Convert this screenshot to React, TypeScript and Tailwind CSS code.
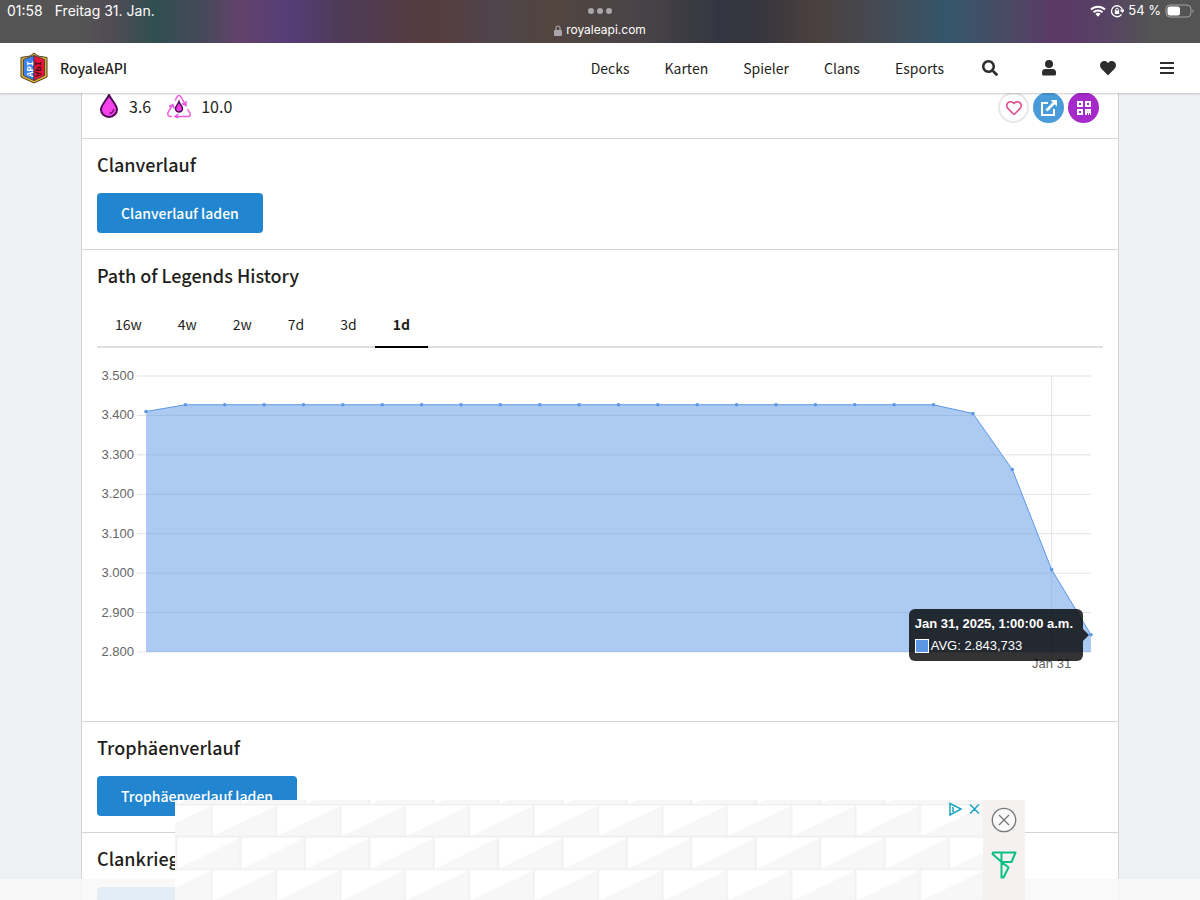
import { FaHeart, FaRegHeart, FaSearch } from 'react-icons/fa';

const NAV_ITEMS = ['Decks', 'Karten', 'Spieler', 'Clans', 'Esports'];
const RANGES = ['16w', '4w', '2w', '7d', '3d', '1d'];
const TICKS = [3500, 3400, 3300, 3200, 3100, 3000, 2900, 2800];
const VALUES = [3410, ...Array.from({ length: 20 }, () => 3427), 3405, 3263, 3009, 2843.733];

const PLOT = { left: 49, right: 994, top: 16, bottom: 292 };
const toX = (index: number) => PLOT.left + (index * (PLOT.right - PLOT.left)) / (VALUES.length - 1);
const toY = (value: number) => PLOT.top + ((3500 - value) / 700) * (PLOT.bottom - PLOT.top);

const Logo = () => (
  <svg viewBox="0 0 28 32" className="h-8 w-7" aria-hidden="true">
    <path d="M14 1 18 4 27 5.500V25L14 31 1 25V5.500L10 4Z" fill="#e5b02c" stroke="#4d4126" />
    <path d="M14 3.500 3.500 7.500V23.500L14 28.500Z" fill="#3b82f6" stroke="#334" strokeWidth="0.8" />
    <path d="M14 3.500 24.500 7.500V23.500L14 28.500Z" fill="#ee1138" stroke="#334" strokeWidth="0.8" />
    <g fontSize="9" fontWeight="bold" fontFamily="Liberation Mono, monospace">
      <text transform="translate(13 25) rotate(-90)" fill="#fff">
        API
      </text>
      <text transform="translate(15 25) scale(-1 1) rotate(-90)" fill="#42111e">
        API
      </text>
    </g>
  </svg>
);

const UserIcon = () => (
  <svg viewBox="0 0 16 16" className="size-4" fill="currentColor" aria-hidden="true">
    <circle cx="8" cy="4" r="4" />
    <path d="M4.500 9h7a3.500 3.500 0 0 1 3.500 3.500V14a1.500 1.500 0 0 1-1.500 1.500h-11A1.500 1.500 0 0 1 1 14v-1.500A3.500 3.500 0 0 1 4.500 9Z" />
  </svg>
);

const MenuIcon = () => (
  <svg viewBox="0 0 16 16" className="size-4" fill="currentColor" aria-hidden="true">
    <path d="M1 2h14v2H1zM1 7h14v2H1zM1 12h14v2H1z" />
  </svg>
);

const StatusBar = () => (
  <div className="relative h-[43px] bg-[linear-gradient(90deg,#545454_0%,#545454_7%,#524b55_9%,#304f50_13%,#47485a_17%,#63426a_20%,#553d78_24%,#4e3b5a_28%,#563d3d_36%,#4f444b_41%,#51453f_46%,#4a4448_53%,#333641_60%,#36353f_63%,#4b403e_68%,#454a53_73%,#34566a_79%,#4a4a63_84%,#5c3867_88%,#574264_92%,#545454_96%,#545454_100%)] font-[Inter,sans-serif] text-[13px] text-white">
    <div className="flex justify-between pr-1.5 pl-[7px]">
      <div className="flex gap-3 text-[14px]">
        <span>01:58</span>
        <span>Freitag 31. Jan.</span>
      </div>
      <div className="flex items-center gap-1">
        <svg viewBox="0 0 16 12" className="h-3 w-4" fill="none" stroke="currentColor" strokeWidth="2" aria-hidden="true">
          <path d="M1 4.500a10 10 0 0 1 14 0M3.500 7.300a6.500 6.500 0 0 1 9 0" />
          <path d="M5.500 9a3.700 3.700 0 0 1 5 0L8 11.800Z" fill="currentColor" stroke="none" />
        </svg>
        <svg viewBox="0 0 14 14" className="size-3.5" fill="none" stroke="currentColor" aria-hidden="true">
          <path d="M11.500 10.500A5.500 5.500 0 1 1 12.500 6.500M10.500 6l2 2 1.500-2.500" strokeWidth="1.300" />
          <path d="M4.800 6.500h4.400V10H4.800z" fill="currentColor" stroke="none" />
          <path d="M5.700 7V5.500a1.300 1.300 0 0 1 2.600 0V7" />
        </svg>
        <span>54 %</span>
        <svg viewBox="0 0 29 14" className="h-3.5 w-[29px]" aria-hidden="true">
          <rect x="1" y="1" width="25" height="12" rx="4" fill="none" stroke="#a3a3a3" />
          <rect x="2.500" y="2.500" width="12.500" height="9" rx="2.500" fill="#fff" />
          <path d="M27.500 5v4a2.500 2.500 0 0 0 0-4" fill="#a3a3a3" />
        </svg>
      </div>
    </div>
    <div className="absolute inset-x-0 top-2 flex flex-col items-center gap-2">
      <div className="flex gap-[3px]">
        <i className="size-1.5 rounded-full bg-[#aaa5aa]" />
        <i className="size-1.5 rounded-full bg-[#aaa5aa]" />
        <i className="size-1.5 rounded-full bg-[#aaa5aa]" />
      </div>
      <div className="flex items-center gap-1 text-[12px] leading-4">
        <svg viewBox="0 0 8 11" className="h-[11px] w-2 text-[#aaa5aa]" fill="none" stroke="currentColor" aria-hidden="true">
          <rect y="5" width="8" height="6" rx="1" fill="currentColor" stroke="none" />
          <path d="M2 5.500V3a2 2 0 0 1 4 0v2.500" strokeWidth="1.200" />
        </svg>
        <span>royaleapi.com</span>
      </div>
    </div>
  </div>
);

const Header = () => (
  <header className="relative z-10 flex h-[50px] items-center justify-between bg-white pr-[25px] pl-5 text-[14px] shadow-[0_1px_2px_rgba(0,0,0,0.2)]">
    <a href="#home" className="flex items-center gap-3 font-medium">
      <Logo />
      RoyaleAPI
    </a>
    <nav className="flex items-center gap-[35px]">
      {NAV_ITEMS.map((item) => (
        <a key={item} href={`#${item}`}>
          {item}
        </a>
      ))}
      <div className="ml-[3px] flex items-center gap-[43px] text-[#2d2d2d]">
        <button aria-label="Suche">
          <FaSearch className="size-4" />
        </button>
        <button aria-label="Profil">
          <UserIcon />
        </button>
        <button aria-label="Favoriten">
          <FaHeart className="size-4" />
        </button>
        <button aria-label="Menü">
          <MenuIcon />
        </button>
      </div>
    </nav>
  </header>
);

const ElixirStats = () => (
  <div className="flex items-center justify-between px-[15px] pb-[15px]">
    <div className="flex h-7 items-center gap-4 self-start pl-0.5 text-[16px]">
      <div className="flex items-center gap-2.5">
        <svg viewBox="0 0 20 24" className="h-6 w-5" aria-hidden="true">
          <path d="M10 1C7 7 2 11 2 15.500a8 7.500 0 0 0 16 0C18 11 13 7 10 1Z" fill="#f542ea" stroke="#4d0b55" strokeWidth="2" />
          <path d="M14.500 15q0 4-4 4.500" fill="none" stroke="#7d1485" strokeWidth="1.500" />
        </svg>
        <span>3.6</span>
      </div>
      <div className="flex items-center gap-2.5">
        <svg viewBox="0 0 24 24" className="size-6" fill="none" stroke="#ed5ae0" strokeWidth="1.500" aria-hidden="true">
          <path d="M8 6.500 10 3q2-3 4 0l4.500 8M19 7v4.500l-4-2M20.500 15l2.500 4.500q1 3-2 3H9M11.500 20 8 22.500l3.500 2M5 22.500H3q-3-1-2-4L5.500 11M2 12.500l4-2 1 4" />
          <path d="M12 7.500c-1 3-3.500 4.500-3.500 7a3.500 3.500 0 0 0 7 0c0-2.500-2.500-4-3.500-7Z" fill="#f03be4" stroke="#4d0b55" />
        </svg>
        <span>10.0</span>
      </div>
    </div>
    <div className="flex gap-1 pr-1">
      <button aria-label="Folgen" className="grid size-[31px] place-items-center rounded-full border-2 border-[#e8e8e8] text-[#e0488f]">
        <FaRegHeart className="size-4" />
      </button>
      <button aria-label="Teilen" className="grid size-[31px] place-items-center rounded-full bg-[#4a9bd9] text-white">
        <svg viewBox="0 0 16 16" className="size-4" fill="none" stroke="currentColor" strokeWidth="2" aria-hidden="true">
          <path d="M7 3H1v12h12V9" />
          <path d="m5.500 10.500 8-8" strokeWidth="2.600" />
          <path d="M9.500 0H16v6.500Z" fill="currentColor" stroke="none" />
        </svg>
      </button>
      <button aria-label="QR-Code" className="grid size-[31px] place-items-center rounded-full bg-[#a42bc9] text-white">
        <svg viewBox="0 0 14 14" className="size-3.5" fill="none" stroke="currentColor" strokeWidth="2" aria-hidden="true">
          <path d="M1 1h4v4H1zM9 1h4v4H9zM1 9h4v4H1zM9 14V9h2v2h2V8M11 13h1M13 13h1" />
        </svg>
      </button>
    </div>
  </div>
);

const HistoryChart = () => {
  const line = VALUES.map((value, index) => `${toX(index)},${toY(value)}`).join(' ');
  const jan31 = toX(23);
  return (
    <div className="relative mt-3">
      <svg viewBox="0 0 1006 361" className="block w-full" role="img" aria-label="Path of Legends History">
        <g stroke="#e3e3e3">
          {TICKS.map((tick) => (
            <path key={tick} d={`M40 ${toY(tick)}H${PLOT.right}`} />
          ))}
          <path d={`M${jan31} ${PLOT.top}V${PLOT.bottom + 8}`} />
        </g>
        <polygon points={`${PLOT.left},${PLOT.bottom} ${line} ${PLOT.right},${PLOT.bottom}`} fill="#5c97e6" fillOpacity="0.5" />
        <polyline points={line} fill="none" stroke="#5c97e6" />
        {VALUES.map((value, index) => (
          <circle key={index} cx={toX(index)} cy={toY(value)} r="1.800" fill="#5c97e6" />
        ))}
        <g fontFamily="Liberation Sans, sans-serif" fontSize="13" fill="#666" textAnchor="end">
          {TICKS.map((tick) => (
            <text key={tick} x="37" y={toY(tick) + 4}>
              {(tick / 1000).toFixed(3)}
            </text>
          ))}
          <text x={jan31} y="308" textAnchor="middle">
            Jan 31
          </text>
        </g>
      </svg>
      <div className="absolute top-[249px] right-5 rounded-md bg-black/80 py-1 pr-2.5 pl-1.5 font-['Liberation_Sans',sans-serif] text-[13px] leading-[22px] text-white">
        <div className="font-bold">Jan 31, 2025, 1:00:00 a.m.</div>
        <div className="flex items-center gap-0.5">
          <i className="size-3.5 border border-white bg-[#5c97e6]" />
          AVG: 2.843,733
        </div>
        <i className="absolute top-5 -right-1.5 border-y-6 border-l-6 border-y-transparent border-l-black/80" />
      </div>
    </div>
  );
};

const LoadSection = ({ title, action }: { title: string; action: string }) => (
  <section className="border-t border-[#d4d4d5] px-[15px] pt-[11px] pb-4">
    <h2 className="text-[18px] leading-7 font-medium">{title}</h2>
    <button className="mt-[15px] h-10 rounded bg-[#2185d0] px-6 text-[14px] font-medium text-white">{action}</button>
  </section>
);

const AdBanner = () => (
  <aside className="absolute inset-x-0 bottom-0 z-20 mx-auto flex h-[100px] w-[850px]">
    <div className="relative flex-1 bg-white">
      <svg className="size-full" aria-hidden="true">
        <defs>
          <pattern id="bricks" x="36" y="4" width="64.400" height="64.600" patternUnits="userSpaceOnUse">
            <path d="M2 32 64.400 2V32ZM-34 64.600 29 34V64.600ZM31 64.600 94 34V64.600Z" fill="#f7f7f7" />
            <path d="M0 0.500H65M0 32.500H65M0.500 0V32.500M29.500 32V65" stroke="#f0f0f0" strokeWidth="2" />
          </pattern>
        </defs>
        <rect width="100%" height="100%" fill="url(#bricks)" />
      </svg>
      <svg viewBox="0 0 32 14" className="absolute top-0.5 right-[3px] h-3.5 w-8" fill="none" stroke="#1ba6c4" strokeWidth="1.500" aria-hidden="true">
        <path d="M2 1.500 13 7 2 13ZM5 5v5M22 2.500l9 9M31 2.500l-9 9" />
      </svg>
    </div>
    <div className="flex w-[42px] flex-col items-center gap-[18px] bg-[#f5f1f1] pt-[7px]">
      <button aria-label="Anzeige schließen" className="h-[26px]">
        <svg viewBox="0 0 26 26" className="size-[26px]" fill="none" stroke="#77777a" strokeWidth="1.300" aria-hidden="true">
          <circle cx="13" cy="13" r="11.700" fill="#faf9f9" />
          <path d="m8 8 10 10M18 8 8 18" />
        </svg>
      </button>
      <svg viewBox="0 0 26 28" className="h-7 w-[26px]" fill="none" stroke="#0bbf86" strokeWidth="2" strokeLinejoin="round" aria-hidden="true">
        <path d="M2 1.500H24.500L20.500 11H10.500L1.500 3ZM10.500 2V26.500H12.500L17.500 16.500 10.500 11" />
      </svg>
    </div>
  </aside>
);

export default function App() {
  return (
    <div className="relative h-screen overflow-hidden bg-[#eff0f4] font-['Noto_Sans_CJK_SC',sans-serif] text-[#1f1f20]">
      <StatusBar />
      <Header />
      <main className="mx-[81px] -mt-px border-x border-[#d4d4d5] bg-white">
        <ElixirStats />
        <LoadSection title="Clanverlauf" action="Clanverlauf laden" />
        <section className="border-t border-[#d4d4d5] px-[15px] pt-[11px]">
          <h2 className="text-[18px] leading-7 font-medium">Path of Legends History</h2>
          <div role="tablist" className="mt-[17px] flex border-b-2 border-[#dededf] text-[14px]">
            {RANGES.map((range) => (
              <button
                key={range}
                role="tab"
                aria-selected={range === '1d'}
                className="-mb-0.5 h-[42px] border-b-2 border-transparent px-[18px] pb-1 aria-selected:border-black aria-selected:font-bold"
              >
                {range}
              </button>
            ))}
          </div>
          <HistoryChart />
        </section>
        <LoadSection title="Trophäenverlauf" action="Trophäenverlauf laden" />
        <LoadSection title="Clankriege" action="Clankriege laden" />
      </main>
      <div className="absolute inset-x-0 bottom-0 z-10 h-[21px] bg-[#f8f8f8]/90" />
      <AdBanner />
    </div>
  );
}
